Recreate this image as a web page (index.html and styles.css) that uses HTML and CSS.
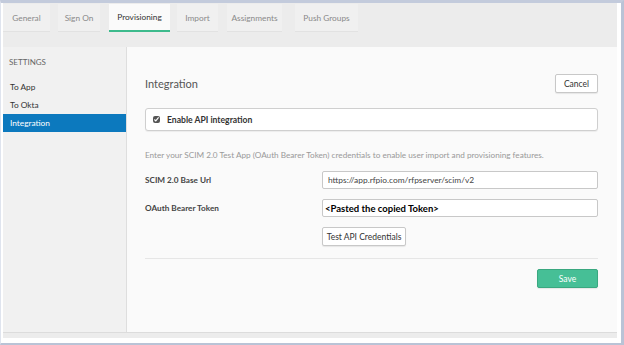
FILE: index.html
```html
<!DOCTYPE html>
<html lang="en">
<head>
  <meta charset="UTF-8" />
  <title>App Provisioning</title>
  <link rel="stylesheet" href="styles.css">
</head>
<body>
  <div class="frame">
    <div class="app-shell">
      <ul class="tabs">
        <li class="tab">General</li>
        <li class="tab">Sign On</li>
        <li class="tab active">Provisioning</li>
        <li class="tab">Import</li>
        <li class="tab">Assignments</li>
        <li class="tab">Push Groups</li>
      </ul>

      <div class="panel">
        <aside class="sidebar">
          <div class="side-title">Settings</div>
          <a class="side-link">To App</a>
          <a class="side-link">To Okta</a>
          <a class="side-link selected">Integration</a>
        </aside>

        <section class="content">
          <div class="content-head">
            <h2>Integration</h2>
            <button class="btn cancel">Cancel</button>
          </div>

          <label class="enable-box">
            <input type="checkbox" checked>
            <span>Enable API integration</span>
          </label>

          <p class="hint">Enter your SCIM 2.0 Test App (OAuth Bearer Token) credentials to enable user import and provisioning features.</p>

          <div class="form-grid">
            <label class="field-label">SCIM 2.0 Base Url</label>
            <input class="field" type="text" value="https://app.rfpio.com/rfpserver/scim/v2">

            <label class="field-label">OAuth Bearer Token</label>
            <input class="field token" type="text" value="<Pasted the copied Token>">

            <span></span>
            <div class="btn-row"><button class="btn test">Test API Credentials</button></div>
          </div>

          <div class="form-foot">
            <button class="btn save">Save</button>
          </div>
        </section>
      </div>
    </div>
  </div>
</body>
</html>
```

FILE: styles.css
```css
* {
  box-sizing: border-box;
  font-family: 'Lato', 'Open Sans', sans-serif;
}

body {
  margin: 0;
  background: #fff;
}

.frame {
  width: 624px;
  height: 345px;
  border-top: 3px solid #c3cbdc;
  border-right: 3px solid #b9c3d6;
  border-bottom: 2px solid #b9c3d6;
  border-left: 1px solid #dfe4ee;
  padding: 0 4px 5px 2px;
}

.app-shell {
  background: #ececec;
  height: 100%;
  display: flex;
  flex-direction: column;
  padding-bottom: 5px;
}

.tabs {
  list-style: none;
  margin: 0;
  padding: 1px 0 0 0;
  display: flex;
  height: 29px;
}

.tab {
  background: #f0f0f0;
  color: #8a8a8a;
  font-size: 8.3px;
  white-space: nowrap;
  display: flex;
  align-items: center;
  justify-content: center;
  border-bottom: 1px solid #e2e2e2;
}

.tab:nth-child(1) { width: 47px; }
.tab:nth-child(2) { width: 42px; margin-left: 8px; }
.tab:nth-child(3) { width: 61px; margin-left: 9px; }
.tab:nth-child(4) { width: 41px; margin-left: 7px; }
.tab:nth-child(5) { width: 55px; margin-left: 9px; }
.tab:nth-child(6) { width: 63px; margin-left: 13px; }

.tab.active {
  background: #fafafa;
  color: #333;
  border-bottom: 2px solid #3dba8c;
}

.panel {
  margin-top: 15px;
  flex: 1;
  display: flex;
  background: #fafafa;
  border-bottom: 1px solid #dcdcdc;
}

.sidebar {
  width: 124px;
  background: #f1f1f1;
  border-right: 1px solid #dedede;
  display: flex;
  flex-direction: column;
  padding-top: 10px;
}

.side-title {
  text-transform: uppercase;
  color: #666;
  font-size: 8px;
  padding: 0 6px;
  margin-bottom: 11px;
}

.side-link {
  font-size: 8.3px;
  color: #333;
  padding: 0 7px;
  height: 18px;
  line-height: 18px;
}

.side-link.selected {
  background: #0c79be;
  color: #fff;
}

.content {
  flex: 1;
  padding: 27px 19px 0 18px;
}

.content-head {
  display: flex;
  justify-content: space-between;
  align-items: center;
  height: 19px;
}

h2 {
  margin: 0;
  font-size: 11px;
  font-weight: 400;
  color: #555;
}

.btn {
  background: #fff;
  border: 1px solid #c8c8c8;
  border-radius: 2px;
  font-size: 8.5px;
  color: #333;
  height: 19px;
  padding: 0;
  box-shadow: 0 1px 1px rgba(0, 0, 0, 0.08);
}

.btn.cancel {
  width: 43px;
}

.btn.test {
  width: 84px;
}

.enable-box {
  margin-top: 15px;
  display: flex;
  align-items: center;
  gap: 7px;
  height: 23px;
  background: #fff;
  border: 1px solid #cfcfcf;
  border-radius: 3px;
  padding: 0 7px;
  font-size: 8.6px;
  color: #333;
  font-weight: 700;
  box-shadow: 0 1px 1px rgba(0, 0, 0, 0.06);
}

.enable-box input {
  margin: 0;
  width: 7px;
  height: 7px;
  accent-color: #555;
}

.hint {
  margin: 19px 0 0 0;
  font-size: 8.2px;
  color: #999;
}

.form-grid {
  margin-top: 11px;
  display: grid;
  grid-template-columns: 177px 1fr;
  row-gap: 10px;
  align-items: center;
}

.field-label {
  font-size: 8.2px;
  font-weight: 700;
  color: #444;
}

.field {
  height: 18px;
  border: 1px solid #c8c8c8;
  border-radius: 2px;
  background: #fff;
  font-size: 8.4px;
  color: #444;
  padding: 0 5px;
}

.field.token {
  font-weight: 700;
  font-size: 9.5px;
  color: #000;
  padding: 0 2px;
}

.btn-row {
  display: flex;
}

.form-foot {
  margin-top: 12px;
  border-top: 1px solid #e6e6e6;
  padding-top: 10px;
  display: flex;
  justify-content: flex-end;
}

.btn.save {
  background: #46bf96;
  border-color: #3aa880;
  color: #fff;
  width: 61px;
}
```
